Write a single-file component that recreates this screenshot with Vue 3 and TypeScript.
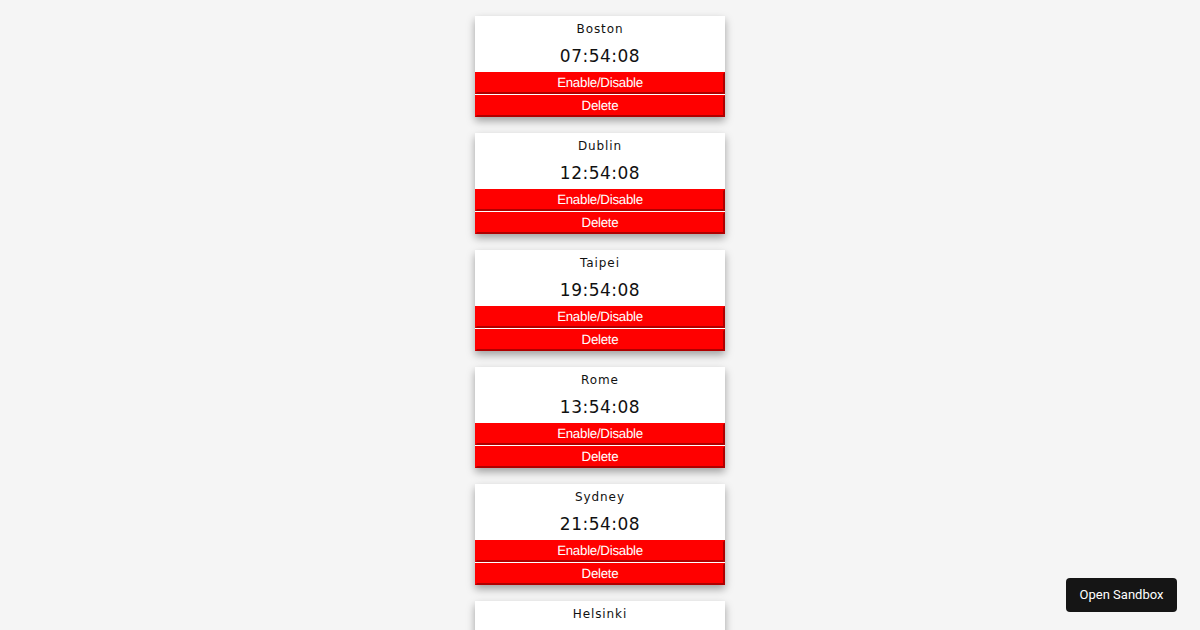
<script setup lang="ts">
interface City { name: string; time?: string }
const cities: City[] = [
  { name: 'Boston', time: '07:54:08' },
  { name: 'Dublin', time: '12:54:08' },
  { name: 'Taipei', time: '19:54:08' },
  { name: 'Rome', time: '13:54:08' },
  { name: 'Sydney', time: '21:54:08' },
  { name: 'Helsinki' },
]
</script>

<template>
  <main class="page">
    <section v-for="c in cities" :key="c.name" class="card">
      <div class="city">{{ c.name }}</div>
      <template v-if="c.time">
        <div class="time">{{ c.time }}</div>
        <button class="btn">Enable/Disable</button>
        <button class="btn">Delete</button>
      </template>
    </section>
    <a class="sandbox">Open Sandbox</a>
  </main>
</template>

<style>
html, body { margin: 0; height: 100%; overflow: hidden; background: #f5f5f5; }
</style>

<style scoped>
.page {
  display: flex;
  flex-direction: column;
  align-items: center;
  gap: 16px;
  padding-top: 16px;
  height: 630px;
  box-sizing: border-box;
  overflow: hidden;
}
.card {
  flex: none;
  width: 250px;
  height: 101px;
  background: #fff;
  box-shadow: 0 4px 8px rgba(0, 0, 0, 0.35);
  display: flex;
  flex-direction: column;
  align-items: stretch;
  text-align: center;
  color: #111;
  font-family: "DejaVu Sans", sans-serif;
}
.city { height: 26px; line-height: 26px; font-size: 12px; letter-spacing: 0.9px; }
.time { height: 30px; line-height: 28px; font-size: 17px; letter-spacing: 0.5px; }
.btn {
  flex: none;
  box-sizing: border-box;
  height: 22px;
  padding: 0;
  margin: 0 0 1px;
  border-style: solid;
  border-width: 2px;
  border-color: #f00 #b00000 #b00000 #f00;
  background: #f00;
  color: #fff;
  font-family: "Liberation Sans", sans-serif;
  font-size: 13.33px;
  letter-spacing: -0.28px;
  line-height: 18px;
  text-rendering: geometricPrecision;
}
.btn:last-child { margin-bottom: 0; }
.sandbox {
  position: absolute;
  left: 1066px;
  top: 578px;
  width: 111px;
  height: 34px;
  border-radius: 4px;
  background: #151515;
  color: #fff;
  font-family: Roboto, sans-serif;
  font-size: 13px;
  line-height: 34px;
  text-align: center;
}
</style>
